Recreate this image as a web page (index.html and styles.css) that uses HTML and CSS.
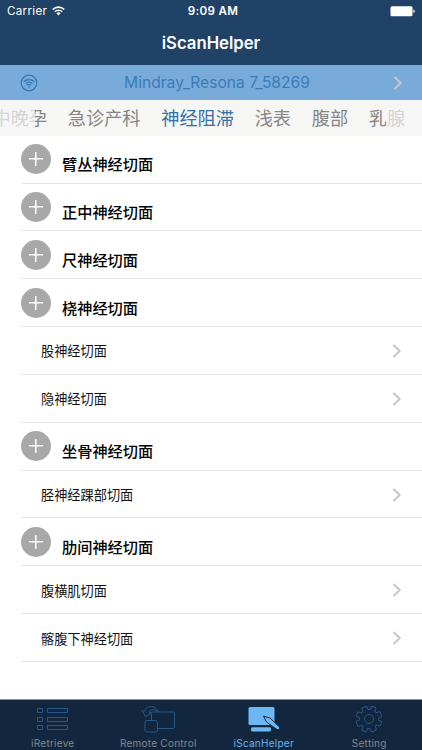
FILE: index.html
```html
<!DOCTYPE html>
<html lang="zh-CN">
<head>
<meta charset="utf-8">
<title>iScanHelper</title>
<link rel="stylesheet" href="styles.css">
</head>
<body>
<div class="app">
  <header class="header">
    <div class="status">
      <span class="carrier">Carrier
        <svg width="13" height="10" viewBox="0 0 13 10" fill="none" stroke="#fff" stroke-width="1.6"><path d="M.7 3.5a8.3 8.3 0 0 1 11.6 0M2.8 5.8a5.3 5.3 0 0 1 7.4 0"/><path d="M4.4 7.3a3 3 0 0 1 4.2 0L6.5 9.5z" fill="#fff" stroke="none"/></svg>
      </span>
      <span class="time">9:09 AM</span>
      <span class="battery"><svg width="26" height="11" viewBox="0 0 26 11" fill="#fff"><rect x=".5" y=".3" width="22" height="10" rx="1.5"/><path d="M23.3 3.5c2 .6 2 3 0 3.6z"/></svg></span>
    </div>
    <h1 class="title">iScanHelper</h1>
  </header>

  <div class="device">
    <svg class="wifi" width="18" height="18" viewBox="0 0 18 18" fill="none" stroke="#3577b3" stroke-width="1.2"><circle cx="9" cy="9" r="7.8"/><path d="M3.8 7.7a7.5 7.5 0 0 1 10.400 0M5.400 9.600a5.200 5.200 0 0 1 7.200 0M7 11.300a3 3 0 0 1 4 0"/><circle cx="9" cy="13" r=".8" fill="#3577b3" stroke="none"/></svg>
    <span class="device-name">Mindray_Resona 7_58269</span>
    <svg class="chevron" width="10" height="14" viewBox="0 0 10 14"><path d="M1.500 1 7.700 7l-6.200 6"/></svg>
  </div>

  <nav class="tabs">
    <span>中晚孕</span><span>急诊产科</span><span class="on">神经阻滞</span><span>浅表</span><span>腹部</span><span>乳腺</span>
  </nav>

  <main class="list">
    <div class="row group"><i class="plus"></i><b>臂丛神经切面</b></div>
    <div class="row group"><i class="plus"></i><b>正中神经切面</b></div>
    <div class="row group"><i class="plus"></i><b>尺神经切面</b></div>
    <div class="row group"><i class="plus"></i><b>桡神经切面</b></div>
    <div class="row item"><span>股神经切面</span><svg class="chevron" width="10" height="14" viewBox="0 0 10 14"><path d="M1.500 1 7.700 7l-6.200 6"/></svg></div>
    <div class="row item"><span>隐神经切面</span><svg class="chevron" width="10" height="14" viewBox="0 0 10 14"><path d="M1.500 1 7.700 7l-6.200 6"/></svg></div>
    <div class="row group"><i class="plus"></i><b>坐骨神经切面</b></div>
    <div class="row item"><span>胫神经踝部切面</span><svg class="chevron" width="10" height="14" viewBox="0 0 10 14"><path d="M1.500 1 7.700 7l-6.200 6"/></svg></div>
    <div class="row group"><i class="plus"></i><b>肋间神经切面</b></div>
    <div class="row item"><span>腹横肌切面</span><svg class="chevron" width="10" height="14" viewBox="0 0 10 14"><path d="M1.500 1 7.700 7l-6.200 6"/></svg></div>
    <div class="row item"><span>髂腹下神经切面</span><svg class="chevron" width="10" height="14" viewBox="0 0 10 14"><path d="M1.500 1 7.700 7l-6.200 6"/></svg></div>
  </main>

  <footer class="bar">
    <div class="cell">
      <svg width="34" height="30" viewBox="0 0 34 30"><path d="M1.500 4.500h5v4h-5zM11.500 4.500h20v4h-20zM1.500 13.500h5v4h-5zM11.500 13.500h20v4h-20zM1.500 21.500h5v4h-5zM11.500 21.500h20v4h-20z"/></svg>
      <span>iRetrieve</span>
    </div>
    <div class="cell">
      <svg width="34" height="30" viewBox="0 0 34 30"><path d="M16.500 24.500H32a1.500 1.500 0 0 0 1.500-1.500V9.500A1.500 1.500 0 0 0 32 8H12a1.500 1.500 0 0 0-1.500 1.500V16"/><rect x="4" y="16.500" width="12.500" height="11.500" rx="2"/><path d="M1 6.500 4.500 12.500l6-3.500-2.500-.7C9.500 5.500 13 4.500 17 7.500 14.500 1.500 6 .5 3.500 7.200z"/></svg>
      <span>Remote Control</span>
    </div>
    <div class="cell active">
      <svg width="34" height="30" viewBox="0 0 34 30"><rect x="1.500" y="3" width="26" height="18" rx="1.500"/><rect x="4" y="23.200" width="20" height="4.300" rx="1.500"/><path class="pen" d="m16.500 12 6.500 2 9.500 9c1 1.500-.8 3.500-2.500 2.500L19.500 18z"/></svg>
      <span>iScanHelper</span>
    </div>
    <div class="cell">
      <svg width="34" height="30" viewBox="0 0 34 30" stroke-linejoin="round"><circle cx="17" cy="15" r="4.500"/><path transform="rotate(22.500 17 15)" d="M14.500 5.700V3.200q0-1.200 1.200-1.200h2.600q1.200 0 1.200 1.200v2.500q1 .3 2 .8l1.800-1.800q.9-.8 1.700 0l2.300 2.300q.8.800 0 1.700l-1.800 1.800q.5 1 .8 2h2.500q1.200 0 1.200 1.200v2.600q0 1.200-1.200 1.200h-2.500q-.3 1-.8 2l1.800 1.800q.8.900 0 1.700l-2.300 2.300q-.8.800-1.700 0l-1.800-1.800q-1 .5-2 .8v2.500q0 1.200-1.200 1.200h-2.600q-1.200 0-1.200-1.200v-2.500q-1-.3-2-.8l-1.800 1.800q-.9.800-1.700 0l-2.300-2.300q-.8-.8 0-1.700l1.800-1.800q-.5-1-.8-2H5.200Q4 17.500 4 16.300v-2.600q0-1.200 1.200-1.200h2.500q.3-1 .8-2L6.700 8.700q-.8-.9 0-1.700L9 4.700q.8-.8 1.700 0l1.800 1.800q1-.5 2-.8z"/></svg>
      <span>Setting</span>
    </div>
  </footer>
</div>
</body>
</html>
```
FILE: styles.css
```css
* { box-sizing: border-box; }
body {
  margin: 0;
  background: #fff;
  font-family: Inter, "Noto Sans CJK SC", sans-serif;
}
.app {
  width: 422px;
  height: 750px;
  display: flex;
  flex-direction: column;
  overflow: hidden;
}
.header {
  height: 65px;
  flex: none;
  background: #204266;
  color: #fff;
}
.status {
  height: 22px;
  padding: 0 6px 0 7px;
  display: grid;
  grid-template-columns: 1fr auto 1fr;
  align-items: center;
  font-size: 11.600px;
  letter-spacing: .3px;
}
.carrier { display: flex; align-items: center; gap: 5px; }
.time { font-weight: 600; padding-left: 3px; }
.battery { display: flex; justify-content: flex-end; }
.title {
  margin: 0;
  text-align: center;
  font-size: 16.700px;
  line-height: 43px;
  font-weight: 600;
}
.device {
  height: 35px;
  flex: none;
  display: flex;
  align-items: center;
  padding: 0 19px 0 20px;
  background: #79abda;
}
.device-name {
  flex: 1;
  padding-left: 3px;
  text-align: center;
  font-size: 15.600px;
  color: #3b7bb8;
}
.chevron { fill: none; stroke: #c7c7cc; stroke-width: 2; }
.tabs {
  position: relative;
  height: 35.700px;
  flex: none;
  display: flex;
  gap: 20.700px;
  overflow: hidden;
  background: #f6f6f5;
  color: #868686;
  font-size: 18.200px;
  line-height: 36px;
  white-space: nowrap;
}
.tabs span:first-child { margin-left: -7.500px; }
.tabs .on { color: #3470a9; }
.tabs::before, .tabs::after {
  content: "";
  position: absolute;
  top: 0;
  bottom: 0;
  width: 35px;
  background: rgba(247, 247, 246, .7);
}
.tabs::before { left: 0; }
.tabs::after { right: 0; }
.list { flex: 1; }
.row {
  height: 47.850px;
  margin-left: 21px;
  display: flex;
  align-items: center;
  border-bottom: 1px solid #e6e6e7;
}
.group b {
  margin: 8px 0 0 11px;
  font-size: 15.200px;
  font-weight: 500;
  color: #000;
}
.plus {
  width: 30px;
  height: 30px;
  border-radius: 50%;
  background:
    linear-gradient(#fff, #fff) center / 14px 1.500px no-repeat,
    linear-gradient(#fff, #fff) center / 1.500px 14px no-repeat,
    #a8a8a8;
}
.item {
  justify-content: space-between;
  padding: 1px 20px 0 20px;
  font-size: 13.200px;
  color: #111;
}
.bar {
  height: 51px;
  flex: none;
  display: grid;
  grid-template-columns: repeat(4, 1fr);
  background: #12273e;
  border-top: 1px solid #8d969f;
}
.cell {
  display: flex;
  flex-direction: column;
  align-items: center;
  padding-top: 4px;
  font-size: 10px;
  line-height: 18px;
  letter-spacing: .25px;
  color: #858789;
}
.cell svg { fill: none; stroke: #29568a; stroke-width: 1; }
.cell.active { color: #6cb5f2; }
.active svg { fill: #6cb8f7; stroke: none; }
.active .pen { stroke: #12273e; }
```
